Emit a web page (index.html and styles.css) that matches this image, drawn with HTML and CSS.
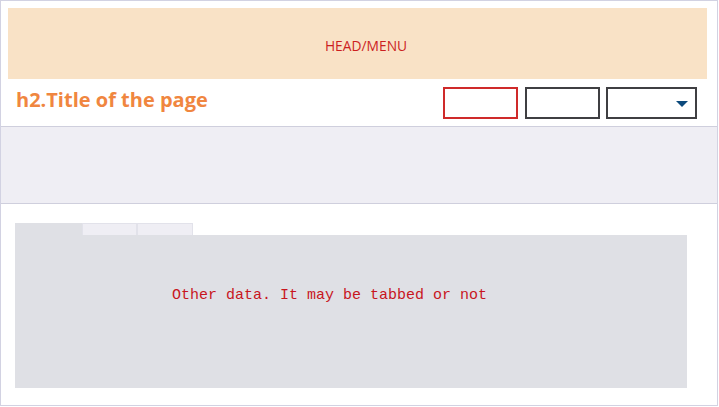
FILE: index.html
```html
<!DOCTYPE html>
<html lang="en">
<head>
<meta charset="utf-8">
<title>Page layout</title>
<link rel="stylesheet" href="styles.css">
</head>
<body>
<div class="frame">
  <header class="head">HEAD/MENU</header>
  <div class="title-row">
    <h2 class="title">h2.Title of the page</h2>
    <div class="controls">
      <div class="box box-red"></div>
      <div class="box box-dark"></div>
      <div class="box box-dark box-select"><span class="caret"></span></div>
    </div>
  </div>
  <div class="band"></div>
  <div class="tabs-area">
    <div class="tabs">
      <div class="tab tab-active"></div>
      <div class="tab tab-2"></div>
      <div class="tab tab-3"></div>
    </div>
    <div class="panel">Other data. It may be tabbed or not</div>
  </div>
</div>
</body>
</html>
```

FILE: styles.css
```css
html, body {
  margin: 0;
  padding: 0;
  background: #ffffff;
}

.frame {
  box-sizing: border-box;
  width: 718px;
  height: 406px;
  border: 1px solid #d2d2e2;
  display: flex;
  flex-direction: column;
}

.head {
  margin: 7px 0 0 7px;
  width: 699px;
  height: 71px;
  background: #f9e2c6;
  color: #cc1f1f;
  font-family: "Open Sans", "Liberation Sans", sans-serif;
  font-size: 13.8px;
  display: flex;
  align-items: center;
  justify-content: center;
  padding: 3px 0 0 17px;
  box-sizing: border-box;
}

.title-row {
  height: 47px;
  display: flex;
  align-items: flex-start;
  justify-content: space-between;
  padding: 0 20px 0 15px;
}

.title {
  margin: 8px 0 0 0;
  font-family: "Open Sans", "Liberation Sans", sans-serif;
  font-weight: 700;
  font-size: 20px;
  line-height: 26px;
  color: #f08640;
}

.controls {
  display: flex;
  margin-top: 8px;
}

.box {
  box-sizing: border-box;
  width: 75px;
  height: 32px;
  background: #ffffff;
}

.box-red {
  border: 2px solid #cf2a2a;
  margin-right: 7px;
}

.box-dark {
  border: 2px solid #3f3f42;
}

.box-dark + .box-dark {
  margin-left: 6px;
}

.box-select {
  width: 91px;
  display: flex;
  align-items: center;
  justify-content: flex-end;
  padding-right: 7px;
}

.caret {
  width: 0;
  height: 0;
  border-left: 6px solid transparent;
  border-right: 6px solid transparent;
  border-top: 6px solid #0c4a7c;
  margin-top: 2px;
}

.band {
  height: 76px;
  background: #efeef4;
  border-top: 1px solid #cfcfdd;
  border-bottom: 1px solid #cfcfdd;
}

.tabs-area {
  padding: 19px 0 0 14px;
}

.tabs {
  display: flex;
  height: 12px;
}

.tab {
  box-sizing: border-box;
  height: 12px;
}

.tab-active {
  width: 67px;
  background: #dfe0e5;
}

.tab-2,
.tab-3 {
  background: #efeef4;
  border: 1px solid #e2e2ea;
  border-bottom: none;
}

.tab-2 {
  width: 55px;
}

.tab-3 {
  width: 56px;
}

.panel {
  width: 672px;
  height: 153px;
  background: #dfe0e5;
  color: #c8161e;
  font-family: "Liberation Mono", "DejaVu Sans Mono", monospace;
  font-size: 15px;
  line-height: 20px;
  box-sizing: border-box;
  padding: 51px 0 0 157px;
}
```
